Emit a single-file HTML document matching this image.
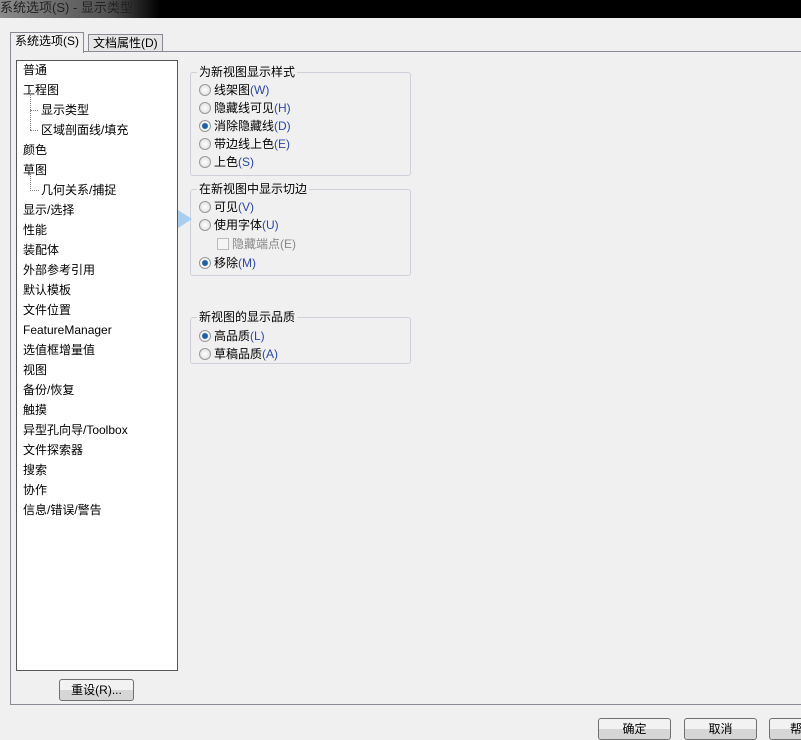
<!DOCTYPE html>
<html><head><meta charset="utf-8"><style>
body{margin:0;width:801px;height:738px;background:#f0f0f0;position:relative;overflow:hidden;font-family:"Liberation Sans","Noto Sans CJK SC",sans-serif;font-size:12px;color:#000}
.a{position:absolute;white-space:nowrap}
.title{left:0;top:0;width:801px;height:18px;background:linear-gradient(90deg,#8a8a8a 0,#505050 110px,#000 160px,#000);color:#111}
.tab{position:absolute;border:1px solid #8a8a95;border-bottom:none;background:#f0f0f0;padding:0 4px;line-height:17px}
.grp{position:absolute;border:1px solid #d0d0dc;border-radius:3px}
.lg{position:absolute;top:-8px;left:6px;background:#f0f0f0;padding:0 2px;line-height:14px}
.r{position:absolute;left:8px;line-height:18px}
.r i{display:inline-block;width:12px;height:12px;border:1px solid #999;border-radius:50%;background:radial-gradient(#fff,#d8d8d8);vertical-align:-2px;margin-right:3px;box-sizing:border-box}
.r i.on{background:radial-gradient(#1d5fa8 0,#1d5fa8 2.5px,#fff 3.5px,#d8d8d8)}
.u{color:#2d46a6}
.btn{position:absolute;border:1px solid #707070;border-radius:3px;background:linear-gradient(#f2f2f2 50%,#d6d6d6 50%);text-align:center;line-height:20px;height:20px}
.ti{position:absolute;left:6px;line-height:20px}
</style></head><body>
<div class="a title"><span style="position:absolute;left:0;top:-3px;font-size:13px;color:#222">系统选项(S) - 显示类型</span></div>
<div class="a" style="left:10px;top:51px;width:800px;height:652px;border:1px solid #8a8a95;border-right:none"></div>
<div class="tab" style="left:10px;top:32px;height:20px;z-index:2">系统选项(S)</div>
<div class="tab" style="left:88px;top:34px;height:16px;background:#e6e6e6">文档属性(D)</div>
<div class="a" style="left:16px;top:60px;width:160px;height:609px;border:1px solid #555;background:#fff"></div>
<div class="a" style="left:17px;top:60px">
<div class="ti" style="top:0">普通</div>
<div class="ti" style="top:20px">工程图</div>
<div class="ti" style="top:40px;left:24px">显示类型</div>
<div class="ti" style="top:60px;left:24px">区域剖面线/填充</div>
<div class="ti" style="top:80px">颜色</div>
<div class="ti" style="top:100px">草图</div>
<div class="ti" style="top:120px;left:24px">几何关系/捕捉</div>
<div class="ti" style="top:140px">显示/选择</div>
<div class="ti" style="top:160px">性能</div>
<div class="ti" style="top:180px">装配体</div>
<div class="ti" style="top:200px">外部参考引用</div>
<div class="ti" style="top:220px">默认模板</div>
<div class="ti" style="top:240px">文件位置</div>
<div class="ti" style="top:260px">FeatureManager</div>
<div class="ti" style="top:280px">选值框增量值</div>
<div class="ti" style="top:300px">视图</div>
<div class="ti" style="top:320px">备份/恢复</div>
<div class="ti" style="top:340px">触摸</div>
<div class="ti" style="top:360px">异型孔向导/Toolbox</div>
<div class="ti" style="top:380px">文件探索器</div>
<div class="ti" style="top:400px">搜索</div>
<div class="ti" style="top:420px">协作</div>
<div class="ti" style="top:440px">信息/错误/警告</div>
<div class="a" style="left:13px;top:30px;width:8px;height:40px;border-left:1px dotted #888"></div>
<div class="a" style="left:13px;top:50px;width:8px;border-top:1px dotted #888"></div>
<div class="a" style="left:13px;top:70px;width:8px;border-top:1px dotted #888"></div>
<div class="a" style="left:13px;top:110px;width:8px;height:20px;border-left:1px dotted #888;border-bottom:1px dotted #888"></div>
</div>
<div class="grp" style="left:190px;top:72px;width:219px;height:102px"><span class="lg">为新视图显示样式</span>
<div class="r" style="top:8px"><i></i>线架图<span class="u">(W)</span></div>
<div class="r" style="top:26px"><i></i>隐藏线可见<span class="u">(H)</span></div>
<div class="r" style="top:44px"><i class="on"></i>消除隐藏线<span class="u">(D)</span></div>
<div class="r" style="top:62px"><i></i>带边线上色<span class="u">(E)</span></div>
<div class="r" style="top:80px"><i></i>上色<span class="u">(S)</span></div>
</div>
<div class="grp" style="left:190px;top:189px;width:219px;height:85px"><span class="lg">在新视图中显示切边</span>
<div class="r" style="top:8px"><i></i>可见<span class="u">(V)</span></div>
<div class="r" style="top:26px"><i></i>使用字体<span class="u">(U)</span></div>
<div class="r" style="top:45px;left:26px;color:#888"><i style="border-radius:0;background:#f4f4f4;width:12px;height:12px;border-color:#bbb"></i>隐藏端点(E)</div>
<div class="r" style="top:64px"><i class="on"></i>移除<span class="u">(M)</span></div>
</div>
<div class="a" style="left:178px;top:210px;width:0;height:0;border-top:9px solid transparent;border-bottom:9px solid transparent;border-left:14px solid #a9cdee"></div>
<div class="grp" style="left:190px;top:317px;width:219px;height:45px"><span class="lg">新视图的显示品质</span>
<div class="r" style="top:9px"><i class="on"></i>高品质<span class="u">(L)</span></div>
<div class="r" style="top:27px"><i></i>草稿品质<span class="u">(A)</span></div>
</div>
<div class="btn" style="left:59px;top:679px;width:73px">重设(R)...</div>
<div class="btn" style="left:598px;top:718px;width:71px">确定</div>
<div class="btn" style="left:684px;top:718px;width:71px">取消</div>
<div class="btn" style="left:769px;top:718px;width:71px;text-align:left;padding-left:20px">帮</div>
</body></html>
